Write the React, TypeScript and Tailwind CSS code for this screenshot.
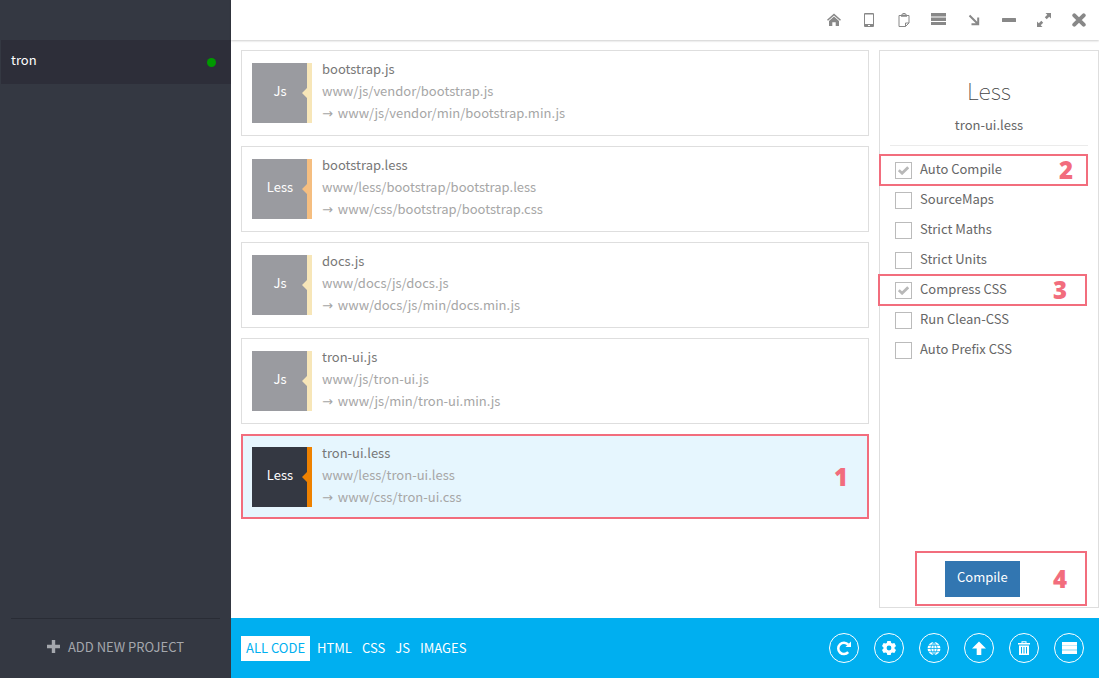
import React from "react";

type FileKind = "Js" | "Less";

interface SourceFile {
  kind: FileKind;
  name: string;
  source: string;
  output: string;
  selected?: boolean;
}

const files: SourceFile[] = [
  { kind: "Js", name: "bootstrap.js", source: "www/js/vendor/bootstrap.js", output: "www/js/vendor/min/bootstrap.min.js" },
  { kind: "Less", name: "bootstrap.less", source: "www/less/bootstrap/bootstrap.less", output: "www/css/bootstrap/bootstrap.css" },
  { kind: "Js", name: "docs.js", source: "www/docs/js/docs.js", output: "www/docs/js/min/docs.min.js" },
  { kind: "Js", name: "tron-ui.js", source: "www/js/tron-ui.js", output: "www/js/min/tron-ui.min.js" },
  { kind: "Less", name: "tron-ui.less", source: "www/less/tron-ui.less", output: "www/css/tron-ui.css", selected: true },
];

interface Option {
  label: string;
  checked?: boolean;
  step?: number;
  frame?: string;
  stepPlace?: string;
}

const options: Option[] = [
  { label: "Auto Compile", checked: true, step: 2, frame: "-left-[11px] right-0", stepPlace: "pr-[13px]" },
  { label: "SourceMaps" },
  { label: "Strict Maths" },
  { label: "Strict Units" },
  { label: "Compress CSS", checked: true, step: 3, frame: "-left-3 right-px", stepPlace: "pr-[18px]" },
  { label: "Run Clean-CSS" },
  { label: "Auto Prefix CSS" },
];

function Glyph({ w, h, children }: { w: number; h: number; children: React.ReactNode }) {
  return (
    <svg width={w} height={h} viewBox={`0 0 ${w} ${h}`} fill="currentColor" aria-hidden="true">
      {children}
    </svg>
  );
}

const windowTools = [
  {
    label: "Home",
    icon: (
      <Glyph w={14} h={14}>
        <path d="M7 0.4 L14 6.7 L13 7.8 L7 2.5 L1 7.8 L0 6.7 Z" />
        <path d="M7 3.5 L12 8 V13 H8.7 V9.2 H5.3 V13 H2 V8 Z" />
      </Glyph>
    ),
  },
  {
    label: "Device",
    icon: (
      <Glyph w={10} h={14}>
        <path fillRule="evenodd" d="M1 0 H9 Q10 0 10 1 V13 Q10 14 9 14 H1 Q0 14 0 13 V1 Q0 0 1 0 Z M1 1.5 V11 H9 V1.5 Z M4 12 V13 H6 V12 Z" />
      </Glyph>
    ),
  },
  {
    label: "Clipboard",
    icon: (
      <Glyph w={12} h={14}>
        <path d="M3 2.5 H1 V13.5 H7.5 L11 10 V2.5 H9 M7.5 13.5 V10 H11" fill="none" stroke="currentColor" />
        <path fillRule="evenodd" d="M3 3.8 V1.5 H4.5 V0 H7.5 V1.5 H9 V3.8 Z M5.4 0.9 V1.9 H6.6 V0.9 Z" />
      </Glyph>
    ),
  },
  {
    label: "List",
    icon: (
      <Glyph w={15} h={14}>
        <path d="M0 0 H15 V3 H0 Z M0 5 H15 V8 H0 Z M0 9 H15 V12 H0 Z" />
        <path d="M0 3 H15 V5 H0 Z" opacity="0.5" />
      </Glyph>
    ),
  },
  {
    label: "Dock",
    icon: (
      <Glyph w={12} h={12}>
        <path d="M1.5 1.5 L10 10 M10.2 3.5 V10.2 H3.5" fill="none" stroke="currentColor" strokeWidth="2" />
      </Glyph>
    ),
  },
  {
    label: "Minimize",
    icon: (
      <Glyph w={14} h={4}>
        <rect width="14" height="4" rx="0.5" />
      </Glyph>
    ),
  },
  {
    label: "Maximize",
    icon: (
      <Glyph w={14} h={14}>
        <path d="M8.5 0 H14 V5.5 L12.2 3.7 L9.7 6.2 L7.8 4.3 L10.3 1.8 Z M5.5 14 H0 V8.5 L1.8 10.3 L4.3 7.8 L6.2 9.7 L3.7 12.2 Z" />
      </Glyph>
    ),
  },
  {
    label: "Close",
    icon: (
      <Glyph w={14} h={14}>
        <path d="M2.3 2.3 L11.7 11.7 M11.7 2.3 L2.3 11.7" stroke="currentColor" strokeWidth="4" strokeLinecap="round" />
      </Glyph>
    ),
  },
];

const actions = [
  {
    label: "Refresh",
    icon: (
      <Glyph w={16} h={16}>
        <path d="M12.2 12.2 A5.7 5.7 0 1 1 12.2 4.6" fill="none" stroke="currentColor" strokeWidth="2.5" />
        <path d="M15 1.5 V7 H9.5 Z" />
      </Glyph>
    ),
  },
  {
    label: "Settings",
    icon: (
      <Glyph w={16} h={16}>
        <path
          fillRule="evenodd"
          d="M6.3 1 H9.7 L10.2 3 L11.3 3.6 L13.4 3 L15 5.9 L13.5 7.4 V8.6 L15 10.1 L13.4 13 L11.3 12.4 L10.2 13 L9.7 15 H6.3 L5.8 13 L4.7 12.4 L2.6 13 L1 10.1 L2.5 8.6 V7.4 L1 5.9 L2.6 3 L4.7 3.6 L5.8 3 Z M8 5.6 A2.4 2.4 0 1 0 8 10.4 A2.4 2.4 0 1 0 8 5.6 Z"
        />
      </Glyph>
    ),
  },
  {
    label: "Browser",
    icon: (
      <Glyph w={14} h={14}>
        <circle cx="7" cy="7.5" r="6.5" />
        <path
          d="M7 1 V14 M0 7.5 H14 M1 4.3 H13 M1 10.7 H13 M7 1 Q0.6 7.5 7 14 M7 1 Q13.4 7.5 7 14"
          fill="none"
          stroke="#00aff0"
          strokeWidth="0.8"
        />
      </Glyph>
    ),
  },
  {
    label: "Upload",
    icon: (
      <Glyph w={14} h={14}>
        <path d="M7 0.5 L14 7.5 H9.3 V14 H4.7 V7.5 H0 Z" />
      </Glyph>
    ),
  },
  {
    label: "Delete",
    icon: (
      <Glyph w={12} h={14}>
        <path fillRule="evenodd" d="M0 3.5 V2 H3.5 V0.3 H8.5 V2 H12 V3.5 Z M4.5 1.2 V2 H7.5 V1.2 Z" />
        <path fillRule="evenodd" d="M1 4.5 H11 V14 H1 Z M3 6 V12.5 H4 V6 Z M5.5 6 V12.5 H6.5 V6 Z M8 6 V12.5 H9 V6 Z" />
      </Glyph>
    ),
  },
  {
    label: "Log",
    icon: (
      <Glyph w={15} h={14}>
        <path d="M0 1 H15 V4 H0 Z M0 5 H15 V8 H0 Z M0 10 H15 V13 H0 Z" />
        <path d="M0 4 H15 V5 H0 Z M0 8 H15 V10 H0 Z" opacity="0.75" />
      </Glyph>
    ),
  },
];

function Step({ n }: { n: number }) {
  return <span className="font-['Noto_Sans'] text-2xl font-black text-[#f26d7d]">{n}</span>;
}

function FileCard({ file }: { file: SourceFile }) {
  const flag = file.kind === "Js" ? "text-[#f7e6b8]" : file.selected ? "text-[#ee8100]" : "text-[#f5be80]";
  return (
    <li
      className={`flex items-start gap-[10px] ${
        file.selected
          ? "h-[85px] border-2 border-[#f26d7d] bg-[#e6f6fe] px-[9px] pt-[11px]"
          : "h-[86px] border border-[#dedede] px-[10px] pt-3"
      }`}
    >
      <div className={`flex h-[60px] w-[60px] shrink-0 items-center text-white ${file.selected ? "bg-[#343842]" : "bg-[#9a9ba0]"}`}>
        <span className="min-w-0 flex-1 pb-1 pl-px text-center">{file.kind}</span>
        <svg className={`-ml-[5px] shrink-0 ${flag}`} width="10" height="60" fill="currentColor" aria-hidden="true">
          <path d="M5 0 H10 V60 H5 V35 L0 30 L5 25 Z" />
        </svg>
      </div>
      <div className="-mt-[5px] min-w-0 flex-1 text-[#a6a6a6]">
        <p className="h-[22px] leading-[22px] text-[#777777]">{file.name}</p>
        <p className="h-[22px] leading-[22px]">{file.source}</p>
        <p className="h-[22px] leading-[22px]">
          <span className="mr-[2px] font-['DejaVu_Sans']">→</span> {file.output}
        </p>
      </div>
      {file.selected && (
        <div className="flex h-[60px] items-center pr-[10px]">
          <Step n={1} />
        </div>
      )}
    </li>
  );
}

function OptionRow({ option }: { option: Option }) {
  return (
    <li className="relative h-[30px]">
      <label className="flex h-full items-center gap-2 pl-[5px]">
        <span className="grid">
          <input
            type="checkbox"
            defaultChecked={option.checked}
            className="peer col-start-1 row-start-1 h-[17px] w-[17px] appearance-none border border-[#bbbbbb] bg-white"
          />
          <svg
            className="pointer-events-none invisible col-start-1 row-start-1 place-self-center text-[#b8b8b8] peer-checked:visible"
            width="11"
            height="9"
            viewBox="0 0 11 9"
            aria-hidden="true"
          >
            <path d="M0.8 4.2 L4.1 7.2 L10.2 1.2" fill="none" stroke="currentColor" strokeWidth="2.8" />
          </svg>
        </span>
        <span className="pb-[3px]">{option.label}</span>
      </label>
      {option.step && (
        <div
          className={`pointer-events-none absolute -inset-y-px flex items-center justify-end border-2 border-[#f26d7d] ${option.frame} ${option.stepPlace}`}
        >
          <Step n={option.step} />
        </div>
      )}
    </li>
  );
}

export default function App() {
  return (
    <div className="flex h-screen bg-white font-['Noto_Sans_CJK_SC',sans-serif] text-[13px] text-[#666666]">
      <aside className="flex w-[231px] shrink-0 flex-col bg-[#343842] pt-10">
        <a href="#tron" className="ml-px flex h-11 items-center justify-between bg-[#2d2e39] pr-[15px] pl-[10px] text-white">
          <span className="pb-[5px]">tron</span>
          <span className="h-[9px] w-[9px] rounded-full bg-[#009900]" />
        </a>
        <div className="mx-[11px] mt-auto h-[60px] border-t border-[#292c35]">
          <button type="button" className="flex h-full w-full items-center justify-center gap-2 pb-1 text-[#a4a7ad]">
            <Glyph w={13} h={13}>
              <path d="M4.8 0 H8.2 V4.8 H13 V8.2 H8.2 V13 H4.8 V8.2 H0 V4.8 H4.8 Z" />
            </Glyph>
            ADD NEW PROJECT
          </button>
        </div>
      </aside>

      <div className="flex min-w-0 flex-1 flex-col">
        <header className="flex h-10 shrink-0 items-center justify-end pr-[3px] text-[#888888] shadow-[0_1px_2px_rgba(0,0,0,0.2)]">
          {windowTools.map((tool) => (
            <button key={tool.label} type="button" aria-label={tool.label} className="flex h-10 w-[35px] items-center justify-center">
              {tool.icon}
            </button>
          ))}
        </header>

        <main className="flex min-h-0 flex-1 gap-[10px] py-[10px] pl-[10px]">
          <ul className="flex min-w-0 flex-1 flex-col gap-[10px]">
            {files.map((file) => (
              <FileCard key={file.name} file={file} />
            ))}
          </ul>

          <section className="flex w-[220px] shrink-0 flex-col border border-[#dedede] px-[10px]">
            <div className="border-b border-[#ebebeb] pt-[22px] pb-[10px] text-center">
              <h1 className="text-[23px] leading-[34px] font-thin text-[#444444]">Less</h1>
              <p className="pt-[7px] leading-[21px]">tron-ui.less</p>
            </div>
            <ul className="pt-[9px]">
              {options.map((option) => (
                <OptionRow key={option.label} option={option} />
              ))}
            </ul>
            <div className="mt-auto mr-px mb-px ml-[25px] flex h-[55px] items-center justify-between border-2 border-[#f26d7d] pr-[18px] pl-7">
              <button type="button" className="h-9 bg-[#3276b1] px-3 pb-[3px] text-white">
                Compile
              </button>
              <Step n={4} />
            </div>
          </section>
        </main>

        <footer className="flex h-[60px] shrink-0 items-center justify-between bg-[#00aff0] pr-[15px] pl-[10px] text-white">
          <nav className="flex items-center leading-6">
            <a href="#all" className="mr-[2px] bg-white px-[5px] pb-px text-[#00aff0]">ALL CODE</a>
            <a href="#html" className="px-[5px] pb-px">HTML</a>
            <a href="#css" className="px-[5px] pb-px">CSS</a>
            <a href="#js" className="px-[5px] pb-px">JS</a>
            <a href="#images" className="px-[5px] pb-px">IMAGES</a>
          </nav>
          <div className="flex gap-[15px]">
            {actions.map((action) => (
              <button
                key={action.label}
                type="button"
                aria-label={action.label}
                className="flex h-[30px] w-[30px] items-center justify-center rounded-full border border-white"
              >
                {action.icon}
              </button>
            ))}
          </div>
        </footer>
      </div>
    </div>
  );
}
